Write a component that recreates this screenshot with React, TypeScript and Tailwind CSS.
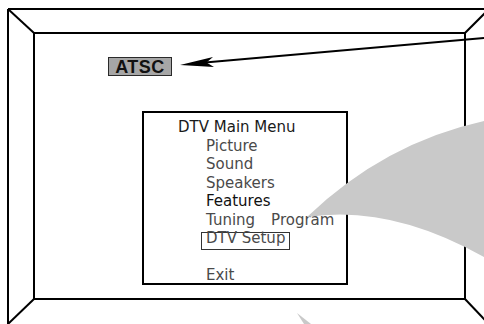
import React from "react";

const items = ["Picture", "Sound", "Speakers"];

// Contorno del televisor y flecha que señala la etiqueta ATSC
function Bezel() {
  return (
    <svg className="absolute inset-0" width="484" height="324" viewBox="0 0 484 324">
      <g stroke="#000" strokeWidth="2" fill="none">
        <line x1="8" y1="9" x2="484" y2="9" />
        <line x1="8" y1="9" x2="8" y2="324" />
        <rect x="34" y="33" width="431" height="266" />
        <line x1="8" y1="9" x2="34" y2="33" />
        <line x1="465" y1="33" x2="485" y2="13" />
        <line x1="34" y1="299" x2="8" y2="324" />
        <line x1="465" y1="299" x2="485" y2="320" />
        <line x1="205" y1="62.4" x2="484" y2="38" />
      </g>
      <path d="M180,65 L214,67 L206.5,62.4 L213,57 Z" fill="#000" />
    </svg>
  );
}

function Callouts() {
  return (
    <svg className="absolute inset-0 pointer-events-none" width="484" height="324" viewBox="0 0 484 324">
      <path d="M307,217 Q384,143 484,121 L484,257 Q390,204 307,217 Z" fill="#c9c9c9" />
      <path d="M297,313 L304,324 L311,324 Z" fill="#c9c9c9" />
    </svg>
  );
}

export default function App() {
  return (
    <div className="relative w-[484px] h-[324px] overflow-hidden bg-white flex flex-col">
      <Bezel />

      <div className="relative ml-[108px] mt-[57px] w-[64px] h-[19px] bg-[#a6a6a6] border border-[#2a2a2a] flex items-center justify-center">
        <span className="font-['Liberation_Sans',Arial,sans-serif] font-bold text-[18px] leading-none tracking-[0.5px] text-[#111]">
          ATSC
        </span>
      </div>

      <div className="relative ml-[142px] mt-[35px] w-[206px] h-[174px] border-2 border-black bg-white pt-[5px] pl-[34px] font-['DejaVu_Sans',sans-serif] text-[15px] leading-[18.5px]">
        <div className="text-[#1a1a1a]">DTV Main Menu</div>
        <div className="ml-[28px] text-[#4a4a4a]">
          {items.map((item) => (
            <div key={item}>{item}</div>
          ))}
          <div className="text-[#111]">Features</div>
          <div className="flex gap-[16px] whitespace-nowrap">
            <span>Tuning</span>
            <span>Program</span>
          </div>
          <div className="flex h-[18.5px]">
            <div className="-ml-[5px] mt-[3.4px] h-[18px] border border-[#333] px-[4px] leading-[10px] whitespace-nowrap">
              DTV Setup
            </div>
          </div>
          <div className="h-[18.5px]" />
          <div>Exit</div>
        </div>
      </div>

      <Callouts />
    </div>
  );
}
